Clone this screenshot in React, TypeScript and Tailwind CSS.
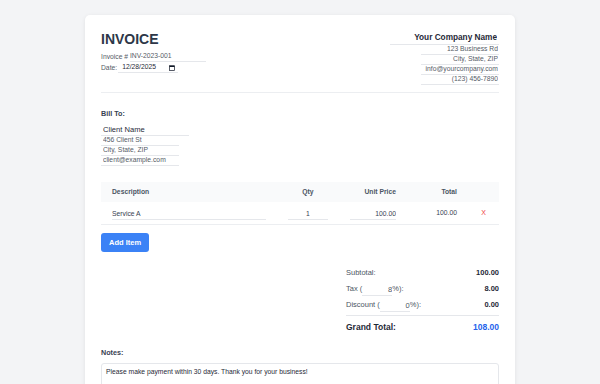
import React, { useState } from 'react';

interface LineItem {
  id: number;
  description: string;
  qty: number;
  price: number;
}

const CalendarIcon = () => (
  <svg width="6" height="6" viewBox="0 0 12 12" fill="none">
    <rect x="1" y="1.5" width="10" height="9.5" stroke="#111827" strokeWidth="1.4" />
    <rect x="1" y="1.5" width="10" height="2.5" fill="#111827" />
  </svg>
);

const App: React.FC = () => {
  const [items] = useState<LineItem[]>([
    { id: 1, description: 'Service A', qty: 1, price: 100 },
  ]);
  const [tax] = useState(8);
  const [discount] = useState(0);

  const subtotal = items.reduce((sum, item) => sum + item.qty * item.price, 0);
  const taxAmount = (subtotal * tax) / 100;
  const discountAmount = (subtotal * discount) / 100;
  const grandTotal = subtotal + taxAmount - discountAmount;

  return (
    <div className="h-[384px] overflow-hidden bg-[#f3f4f6] pt-[15px] font-['Liberation_Sans',Arial,sans-serif]">
      <div className="mx-auto w-[430px] rounded-[5px] bg-white p-[16px] shadow-[0_1px_4px_rgba(0,0,0,0.08)]">
        {/* Header */}
        <div className="flex justify-between border-b border-[#eceef1] pb-[7px]">
          <div>
            <h1 className="text-[14px] font-bold leading-[16px] text-[#2d3748]">INVOICE</h1>
            <div className="mt-[5px] flex h-[10px] items-center text-[6.75px] text-[#555b66]">
              <span>Invoice #&nbsp;</span>
              <input
                defaultValue="INV-2023-001"
                className="h-[10px] w-[76px] border-b border-[#e5e7eb] bg-transparent outline-none"
              />
            </div>
            <div className="mt-[1px] flex h-[10px] items-center text-[6.75px] text-[#555b66]">
              <span>Date:</span>
              <span className="ml-[1px] flex h-[10px] w-[60px] items-center justify-between border-b border-[#e5e7eb] pl-[4px] pr-[3px] text-[#1f2937]">
                12/28/2025
                <CalendarIcon />
              </span>
            </div>
          </div>

          <div className="flex flex-col items-end">
            <input
              defaultValue="Your Company Name"
              className="h-[14px] w-[109px] border-b border-[#e5e7eb] bg-transparent pr-[2px] text-right text-[8.25px] font-bold text-[#1f2937] outline-none"
            />
            {['123 Business Rd', 'City, State, ZIP', 'info@yourcompany.com', '(123) 456-7890'].map((line) => (
              <input
                key={line}
                defaultValue={line}
                className="h-[10px] w-[78px] border-b border-[#e5e7eb] bg-transparent pr-[1px] text-right text-[6.75px] text-[#555b66] outline-none"
              />
            ))}
          </div>
        </div>

        {/* Bill To */}
        <div className="mt-[16px]">
          <div className="text-[7.2px] font-bold leading-[10px] text-[#374151]">Bill To:</div>
          <input
            defaultValue="Client Name"
            className="mt-[5px] block h-[12px] w-[88px] border-b border-[#e5e7eb] bg-transparent pl-[2px] text-[7.6px] text-[#1f2937] outline-none"
          />
          {['456 Client St', 'City, State, ZIP', 'client@example.com'].map((line) => (
            <input
              key={line}
              defaultValue={line}
              className="block h-[10px] w-[78px] border-b border-[#e5e7eb] bg-transparent pl-[2px] text-[6.75px] text-[#555b66] outline-none"
            />
          ))}
        </div>

        {/* Items */}
        <div className="mt-[16px]">
          <div className="grid h-[20px] grid-cols-[176px_62px_68px_61px_31px] items-center bg-[#f9fafb] text-[6.75px] font-bold text-[#4b5563]">
            <div className="px-[11px]">Description</div>
            <div className="px-[11px] text-center">Qty</div>
            <div className="px-[11px] text-right">Unit Price</div>
            <div className="px-[11px] text-right">Total</div>
            <div />
          </div>
          {items.map((item) => (
            <div
              key={item.id}
              className="grid h-[23px] grid-cols-[176px_62px_68px_61px_31px] items-center border-b border-[#eceef1] pt-[1px] text-[6.75px] text-[#374151]"
            >
              <div className="px-[11px]">
                <input
                  defaultValue={item.description}
                  className="h-[12px] w-full border-b border-[#e5e7eb] bg-transparent outline-none"
                />
              </div>
              <div className="px-[11px]">
                <input
                  defaultValue={item.qty}
                  className="h-[12px] w-full border-b border-[#e5e7eb] bg-transparent text-center outline-none"
                />
              </div>
              <div className="px-[11px]">
                <input
                  defaultValue={item.price.toFixed(2)}
                  className="h-[12px] w-full border-b border-[#e5e7eb] bg-transparent text-right outline-none"
                />
              </div>
              <div className="px-[11px] text-right">{(item.qty * item.price).toFixed(2)}</div>
              <div className="text-center">
                <button className="text-[7px] text-[#ef4444]">X</button>
              </div>
            </div>
          ))}
          <button className="mt-[8px] h-[19px] rounded-[3px] bg-[#3b82f6] px-[8px] text-[7.5px] font-bold text-white">
            Add Item
          </button>
        </div>

        {/* Totals */}
        <div className="mt-[13px] flex justify-end">
          <div className="w-[153px] text-[7.5px] text-[#4b5563]">
            <div className="flex h-[16px] items-center justify-between">
              <span>Subtotal:</span>
              <span className="font-bold text-[#1f2937]">{subtotal.toFixed(2)}</span>
            </div>
            <div className="flex h-[16px] items-center justify-between">
              <span className="flex items-center">
                Tax (
                <input
                  defaultValue={tax}
                  className="mt-[2px] h-[12px] w-[30px] border-b border-[#e5e7eb] bg-transparent text-right outline-none"
                />
                %):
              </span>
              <span className="font-bold text-[#1f2937]">{taxAmount.toFixed(2)}</span>
            </div>
            <div className="flex h-[16px] items-center justify-between">
              <span className="flex items-center">
                Discount (
                <input
                  defaultValue={discount}
                  className="mt-[2px] h-[12px] w-[30px] border-b border-[#e5e7eb] bg-transparent text-right outline-none"
                />
                %):
              </span>
              <span className="font-bold text-[#1f2937]">{discountAmount.toFixed(2)}</span>
            </div>
            <div className="mt-[2px] border-t border-[#e5e7eb] pt-[5px]">
              <div className="flex h-[12px] items-center justify-between text-[8.5px] font-bold text-[#1f2937]">
                <span>Grand Total:</span>
                <span className="text-[#2563eb]">{grandTotal.toFixed(2)}</span>
              </div>
            </div>
          </div>
        </div>

        {/* Notes */}
        <div className="mt-[15px]">
          <div className="text-[7.2px] font-bold leading-[10px] text-[#374151]">Notes:</div>
          <textarea
            defaultValue="Please make payment within 30 days. Thank you for your business!"
            className="mt-[5px] block h-[40px] w-full resize-none rounded-[3px] border border-[#e5e7eb] p-[4px] text-[6.75px] leading-[8px] text-[#1f2937] outline-none"
          />
        </div>
      </div>
    </div>
  );
};

export default App;
